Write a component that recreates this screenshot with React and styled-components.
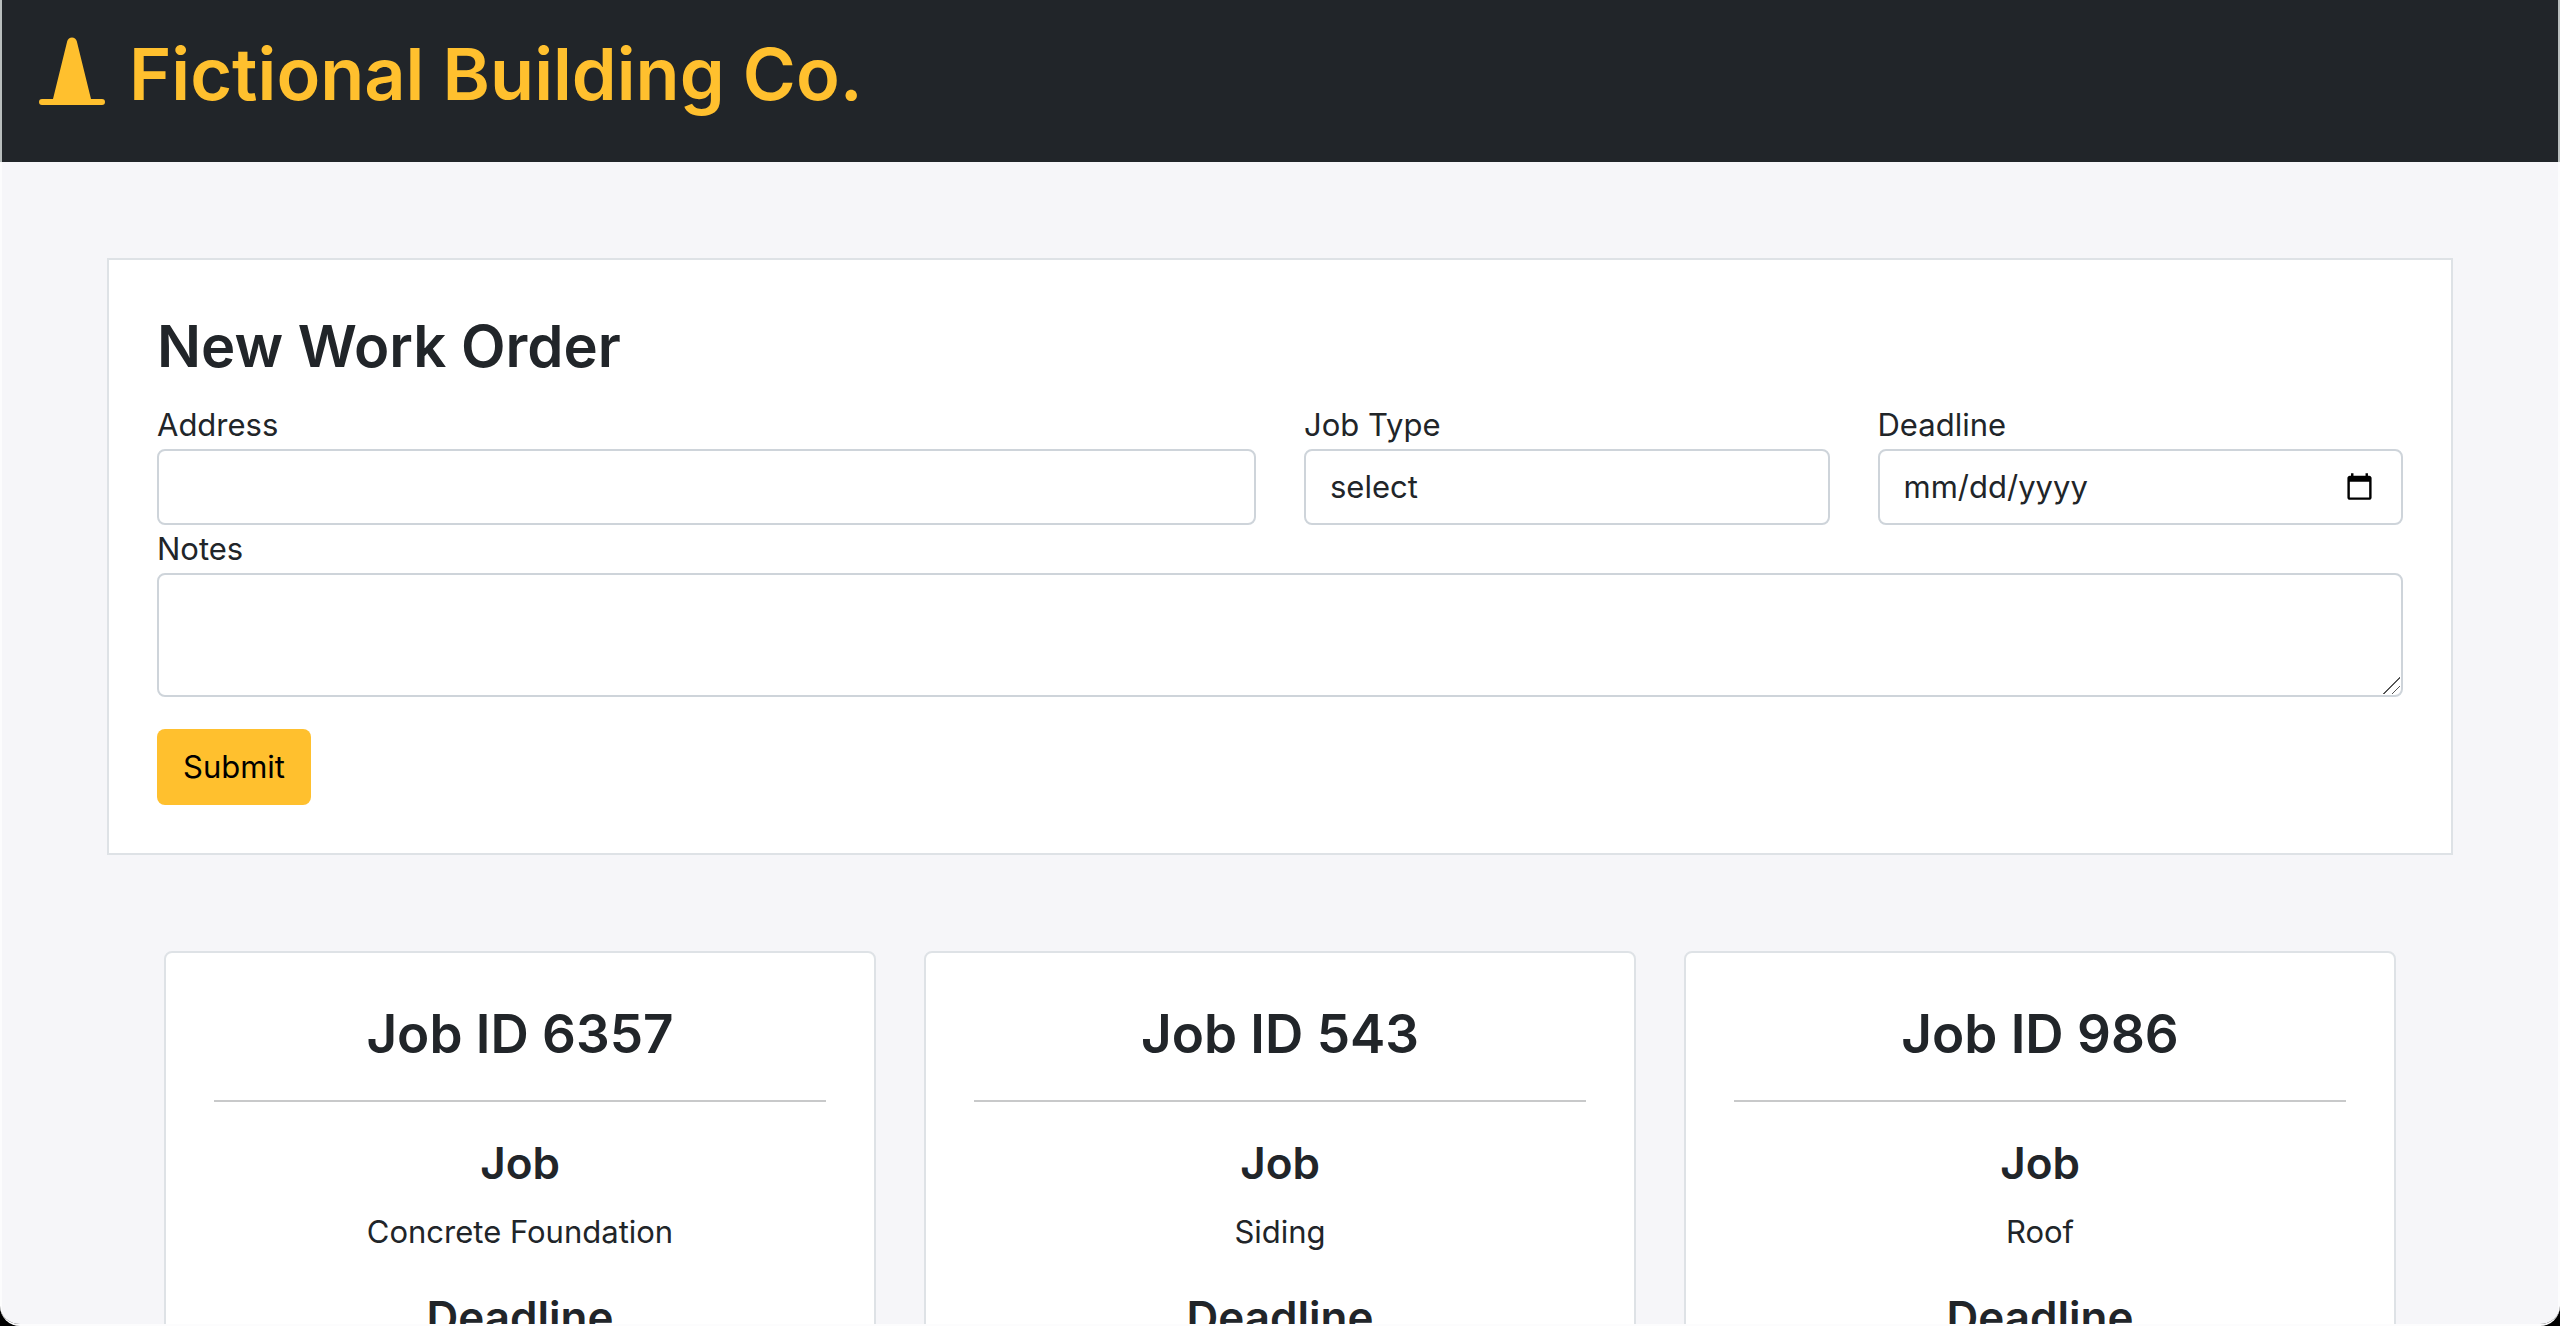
import React from "react";
import styled, { createGlobalStyle } from "styled-components";

const GlobalStyle = createGlobalStyle`
  *, *::before, *::after { box-sizing: border-box; }
  body {
    margin: 0;
    background: #000;
    color: #212529;
    font-family: Inter, "Liberation Sans", sans-serif;
    font-size: 31px;
    line-height: 48px;
  }
`;

const Window = styled.div`
  height: 100vh;
  overflow: hidden auto;
  scrollbar-width: none;
  background: #f6f6f9;
  border-bottom: 2px solid #fcfcfd;
  border-radius: 0 0 20px 20px;
`;

const Header = styled.header`
  display: flex;
  align-items: flex-start;
  gap: 24px;
  padding: 26px 37px 40px;
  background: #212529;
  border: solid #b9bebd;
  border-width: 0 2px;
  color: #ffc02e;
`;

const Cone = styled.svg`
  width: 66px;
  height: 68px;
  margin-top: 11px;
  fill: currentColor;
`;

const SiteTitle = styled.h1`
  margin: 0;
  font-size: 72px;
  line-height: 96px;
  font-weight: 600;
`;

const Main = styled.main`
  display: flex;
  flex-direction: column;
  gap: 96px;
  padding: 96px 105px;
  border: solid #fcfcfd;
  border-width: 0 2px;
`;

const OrderForm = styled.form`
  padding: 48px;
  background: #fff;
  border: 2px solid #dee2e6;
`;

const FormTitle = styled.h2`
  margin: 0 0 16px;
  font-size: 58px;
  line-height: 77px;
  font-weight: 600;
`;

const Fields = styled.div`
  display: grid;
  grid-template-columns: repeat(4, 1fr);
  column-gap: 48px;
`;

const Field = styled.div`
  display: flex;
  flex-direction: column;
  grid-column: span ${(p) => p.$span};
  min-width: 0;
`;

const Control = styled.input`
  display: block;
  width: 100%;
  height: 76px;
  margin: 0;
  padding: 12px 24px;
  font: inherit;
  color: inherit;
  background: #fff;
  border: 2px solid #ced4da;
  border-radius: 8px;
  appearance: none;

  &::-webkit-datetime-edit,
  &::-webkit-datetime-edit-fields-wrapper,
  &::-webkit-datetime-edit-month-field,
  &::-webkit-datetime-edit-day-field,
  &::-webkit-datetime-edit-year-field {
    padding: 0;
  }
`;

const NotesControl = styled(Control)`
  height: 124px;
  resize: vertical;
  background: #fff
    linear-gradient(
      135deg,
      transparent 50%, #555 50%, #555 55%,
      transparent 55%, transparent 74%,
      #555 74%, #555 79%, transparent 79%
    )
    right 1px bottom 1px / 17px 17px no-repeat;

  &::-webkit-resizer { display: none; }
`;

const SubmitButton = styled.button`
  margin-top: 32px;
  height: 76px;
  padding: 0 26px;
  border: 0;
  border-radius: 8px;
  background: #ffc02e;
  color: #000;
  font: inherit;
`;

const Jobs = styled.section`
  display: grid;
  grid-template-columns: repeat(3, 1fr);
  gap: 48px;
  padding: 0 57px;
`;

const JobCard = styled.article`
  padding: 48px;
  background: #fff;
  border: 2px solid #dee2e6;
  border-radius: 8px;
  text-align: center;
`;

const JobTitle = styled.h3`
  margin: 0;
  font-size: 53px;
  line-height: 67px;
  font-weight: 600;
`;

const Rule = styled.hr`
  height: 2px;
  margin: 32px 0;
  border: 0;
  background: #c8c9ca;
`;

const JobLabel = styled.h4`
  margin: 0 0 16px;
  font-size: 44px;
  line-height: 58px;
  font-weight: 600;
`;

const JobValue = styled.p`
  margin: 0 0 32px;
`;

const jobs = [
  { id: 6357, type: "Concrete Foundation" },
  { id: 543, type: "Siding" },
  { id: 986, type: "Roof" },
];

export default function App() {
  return (
    <Window>
      <GlobalStyle />
      <Header>
        <Cone viewBox="0 0 66 68" aria-hidden="true">
          <path d="M28.2 4.2C29.3-.9 36.7-.9 37.8 4.2L52 62h11a3 3 0 0 1 0 6H3a3 3 0 0 1 0-6h11z" />
        </Cone>
        <SiteTitle>Fictional Building Co.</SiteTitle>
      </Header>
      <Main>
        <OrderForm onSubmit={(e) => e.preventDefault()}>
          <FormTitle>New Work Order</FormTitle>
          <Fields>
            <Field $span={2}>
              <label htmlFor="address">Address</label>
              <Control id="address" type="text" />
            </Field>
            <Field $span={1}>
              <label htmlFor="type">Job Type</label>
              <Control as="select" id="type" defaultValue="">
                <option value="">select</option>
                {jobs.map((job) => (
                  <option key={job.id}>{job.type}</option>
                ))}
              </Control>
            </Field>
            <Field $span={1}>
              <label htmlFor="deadline">Deadline</label>
              <Control id="deadline" type="date" />
            </Field>
            <Field $span={4}>
              <label htmlFor="notes">Notes</label>
              <NotesControl as="textarea" id="notes" rows={2} />
            </Field>
          </Fields>
          <SubmitButton type="submit">Submit</SubmitButton>
        </OrderForm>
        <Jobs>
          {jobs.map((job) => (
            <JobCard key={job.id}>
              <JobTitle>Job ID {job.id}</JobTitle>
              <Rule />
              <JobLabel>Job</JobLabel>
              <JobValue>{job.type}</JobValue>
              <JobLabel>Deadline</JobLabel>
            </JobCard>
          ))}
        </Jobs>
      </Main>
    </Window>
  );
}
